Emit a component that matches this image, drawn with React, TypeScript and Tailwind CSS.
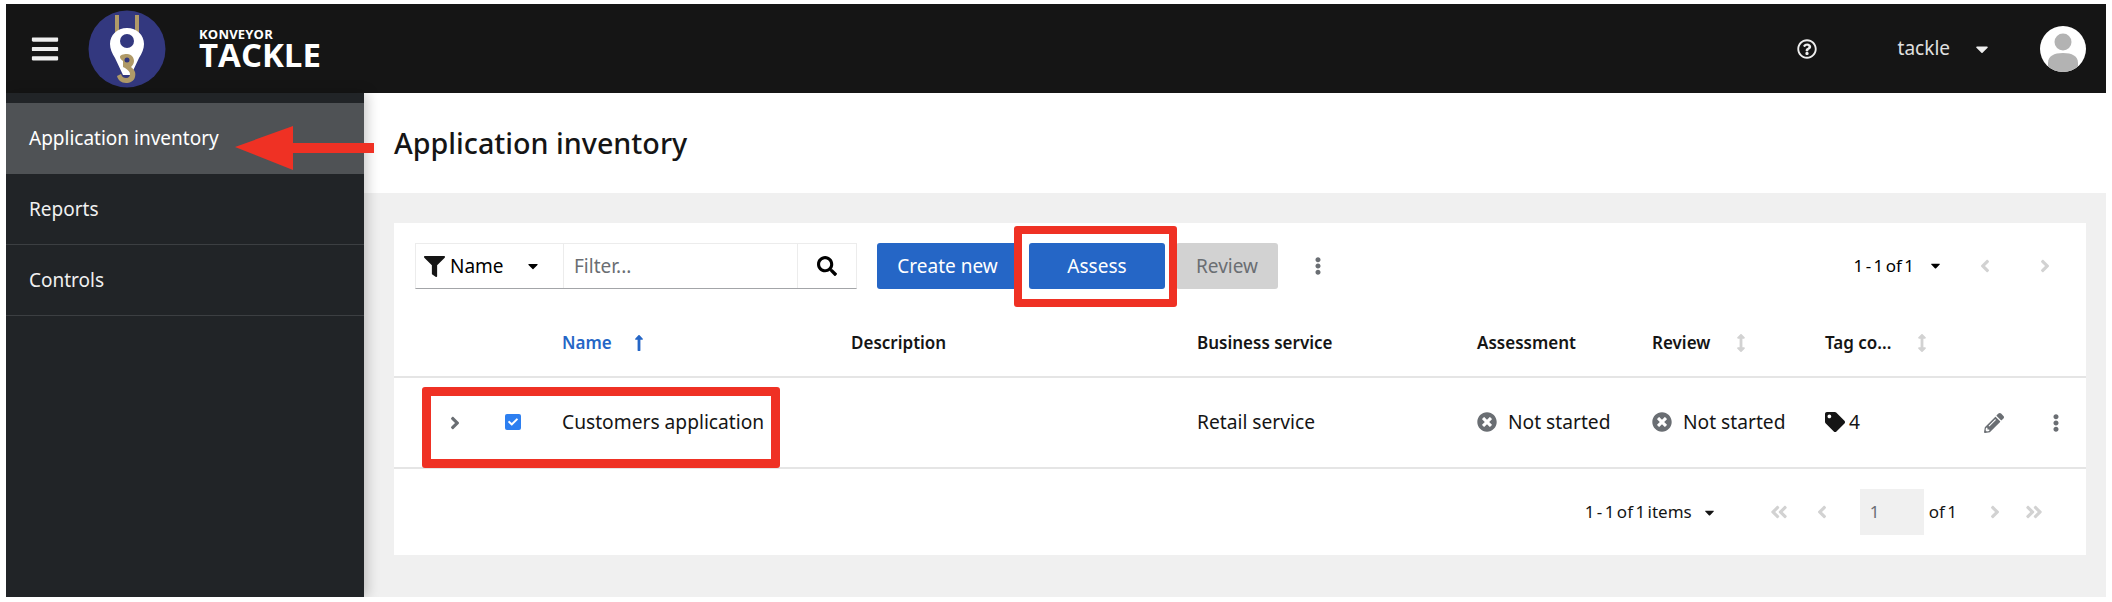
import {
  FaAngleDoubleLeft,
  FaAngleDoubleRight,
  FaAngleLeft,
  FaAngleRight,
  FaArrowsAltV,
  FaBars,
  FaCaretDown,
  FaCheck,
  FaEllipsisV,
  FaFilter,
  FaLongArrowAltUp,
  FaPencilAlt,
  FaRegQuestionCircle,
  FaSearch,
  FaTag,
  FaTimesCircle,
} from 'react-icons/fa'

const columns = 'grid grid-cols-[111px_57px_289px_346px_280px_175px_173px_160px_65px_1fr] items-center'

function Logo() {
  return (
    <svg width="78" height="78" viewBox="0 0 78 78" className="shrink-0">
      <circle cx="39" cy="39" r="38.5" fill="#33387f" />
      <path d="M29 5v22M49 5v22" stroke="#b09a68" strokeWidth="4" fill="none" />
      <path
        d="M39 18c10 0 17 7 17 16 0 5-2 9-5 14l-8 17h-8l-8-17c-3-5-5-9-5-14 0-9 7-16 17-16z"
        fill="#fff"
      />
      <circle cx="39" cy="31" r="7" fill="#33387f" />
      <path
        d="M39 44c5 0 7 4 7 7 0 3-2 5-3 6 4 3 5 6 4 10-1 4-5 6-9 6-5 0-8-3-9-7l4-2c1 3 3 4 5 4 3 0 4-2 4-4s-2-4-5-6l-2-1v-6c-2-1-3-3-3-4 0-2 3-3 7-3z"
        fill="#b09a68"
      />
      <circle cx="39" cy="50" r="2.5" fill="#33387f" />
    </svg>
  )
}

function Avatar() {
  return (
    <svg width="46" height="46" viewBox="0 0 46 46">
      <clipPath id="avatar-clip">
        <circle cx="23" cy="23" r="23" />
      </clipPath>
      <g clipPath="url(#avatar-clip)">
        <rect width="46" height="46" fill="#fff" />
        <circle cx="23" cy="16" r="8.5" fill="#b3b3b3" />
        <path d="M8 46v-9c0-7 6-10 15-10s15 3 15 10v9z" fill="#b3b3b3" />
      </g>
    </svg>
  )
}

function Header() {
  return (
    <header className="flex h-[89px] items-center bg-[#151515] text-white">
      <FaBars size={30} className="ml-[24px] text-[#eeeeee]" />
      <div className="ml-[28px]">
        <Logo />
      </div>
      <div className="ml-[33px] flex flex-col font-['Open_Sans',sans-serif] font-bold">
        <span className="text-[13px] leading-[13px] tracking-[0.2px]">KONVEYOR</span>
        <span className="text-[33px] leading-[28px]">TACKLE</span>
      </div>
      <FaRegQuestionCircle size={20} className="ml-auto text-[#eeeeee]" />
      <span className="ml-[81px] text-[19px] text-[#e0e0e0]">tackle</span>
      <FaCaretDown size={20} className="ml-[22px] text-[#eeeeee]" />
      <div className="mr-[20px] ml-[48px]">
        <Avatar />
      </div>
    </header>
  )
}

function Sidebar() {
  return (
    <aside className="relative z-10 w-[358px] shrink-0 bg-[#212427] pt-[10px] text-[19px] text-[#f0f0f0] shadow-[3px_0_12px_rgba(0,0,0,0.22)]">
      <div className="flex h-[71px] items-center bg-[#4f5255] pl-[23px] text-white">Application inventory</div>
      <div className="flex h-[71px] items-center border-b border-[#3c3f42] pl-[23px]">Reports</div>
      <div className="flex h-[71px] items-center border-b border-[#3c3f42] pl-[23px]">Controls</div>
    </aside>
  )
}

function Toolbar() {
  return (
    <div className="flex h-[87px] items-start pt-[20px] pr-[31px] pl-[21px] text-[19px]">
      <div className="flex h-[46px] w-[442px] border border-[#ececec] border-b-[#a3a5a8]">
        <div className="flex w-[148px] items-center border-r border-[#ececec] pl-[8px]">
          <FaFilter size={21} className="text-[#151515]" />
          <span className="ml-[5px]">Name</span>
          <FaCaretDown size={16} className="ml-[21px]" />
        </div>
        <div className="flex flex-1 items-center pl-[10px] text-[#6a6e73]">Filter...</div>
        <div className="flex w-[59px] items-center justify-center border-l border-[#ececec]">
          <FaSearch size={20} />
        </div>
      </div>
      <button className="ml-[20px] h-[46px] w-[141px] rounded-[3px] bg-[#2566c6] text-white">Create new</button>
      <div className="relative ml-[11px]">
        <button className="block h-[46px] w-[136px] rounded-[3px] bg-[#2566c6] text-white">Assess</button>
        <span className="absolute -top-[17px] -right-[12px] -bottom-[18px] -left-[15px] rounded-[3px] border-[8px] border-[#ef3124]" />
      </div>
      <button className="ml-[11px] h-[46px] w-[102px] rounded-[3px] bg-[#d2d2d2] text-[#6a6e73]">Review</button>
      <FaEllipsisV size={18} className="mt-[14px] ml-[31px] text-[#6a6e73]" />
      <span className="ml-auto pt-[10px] text-[17px] [word-spacing:-2px]">1 - 1 of 1</span>
      <FaCaretDown size={15} className="mt-[15px] ml-[14px]" />
      <FaAngleLeft size={20} className="mt-[13px] ml-[32px] text-[#d2d2d2]" />
      <FaAngleRight size={20} className="mt-[13px] ml-[40px] text-[#d2d2d2]" />
    </div>
  )
}

function SortHeader({ label }: { label: string }) {
  return (
    <span className="flex items-center">
      {label}
      <FaArrowsAltV size={18} className="ml-[22px] text-[#d2d2d2]" />
    </span>
  )
}

function StatusCell() {
  return (
    <span className="flex items-center">
      <FaTimesCircle size={20} className="text-[#6a6e73]" />
      <span className="ml-[11px]">Not started</span>
    </span>
  )
}

function Table() {
  return (
    <div className="text-[#151515]">
      <div className={`${columns} h-[68px] border-b-2 border-[#e5e5e5] text-[17px] font-semibold`}>
        <span />
        <span />
        <span className="flex items-center text-[#2566c6]">
          Name
          <FaLongArrowAltUp size={18} className="ml-[18px]" />
        </span>
        <span>Description</span>
        <span>Business service</span>
        <span>Assessment</span>
        <SortHeader label="Review" />
        <SortHeader label="Tag co..." />
        <span />
        <span />
      </div>
      <div className={`${columns} relative h-[91px] border-b-2 border-[#e5e5e5] text-[19.2px]`}>
        <FaAngleRight size={20} className="ml-[51px] text-[#6a6e73]" />
        <span className="-mt-[2px] flex h-[16px] w-[16px] items-center justify-center rounded-[2px] bg-[#2d7ff0]">
          <FaCheck size={10} className="text-white" />
        </span>
        <span>Customers application</span>
        <span />
        <span>Retail service</span>
        <StatusCell />
        <StatusCell />
        <span className="flex items-center">
          <FaTag size={20} />
          <span className="ml-[4px]">4</span>
        </span>
        <FaPencilAlt size={20} className="-ml-[1px] text-[#6a6e73]" />
        <FaEllipsisV size={18} className="-ml-[3px] text-[#6a6e73]" />
        <span className="absolute top-[9px] left-[28px] h-[81px] w-[358px] rounded-[3px] border-[9px] border-[#ef3124]" />
      </div>
    </div>
  )
}

function Pagination() {
  return (
    <div className="flex h-[86px] items-center justify-end pr-[42px] text-[17px] text-[#151515] [word-spacing:-2px]">
      <span>1 - 1 of 1 items</span>
      <FaCaretDown size={15} className="ml-[10px]" />
      <FaAngleDoubleLeft size={20} className="ml-[52px] text-[#d2d2d2]" />
      <FaAngleLeft size={20} className="ml-[23px] text-[#d2d2d2]" />
      <div className="ml-[28px] flex h-[46px] w-[64px] items-center bg-[#f0f0f0] pl-[10px] text-[#6a6e73]">1</div>
      <span className="ml-[5px]">of 1</span>
      <FaAngleRight size={20} className="ml-[28px] text-[#d2d2d2]" />
      <FaAngleDoubleRight size={20} className="ml-[19px] text-[#d2d2d2]" />
    </div>
  )
}

export default function App() {
  return (
    <div className="h-[602px] bg-white px-[6px] pt-[4px] pb-[5px] font-['Noto_Sans',sans-serif]">
      <div className="relative flex h-full flex-col overflow-hidden">
        <Header />
        <div className="flex min-h-0 flex-1">
          <Sidebar />
          <main className="flex flex-1 flex-col bg-[#f0f0f0]">
            <div className="flex h-[100px] items-center bg-white pl-[30px] text-[28.7px] font-medium text-[#151515]">
              Application inventory
            </div>
            <div className="px-[20px] pt-[30px] pl-[30px]">
              <div className="bg-white">
                <Toolbar />
                <Table />
                <Pagination />
              </div>
            </div>
          </main>
        </div>
        {/* arrow pointing at the sidebar item */}
        <svg width="146" height="46" viewBox="0 0 146 46" className="absolute top-[121px] left-[227px] z-20">
          <path d="M2 22 60 1v17h81v10H60v17z" fill="#ef3124" />
        </svg>
      </div>
    </div>
  )
}
